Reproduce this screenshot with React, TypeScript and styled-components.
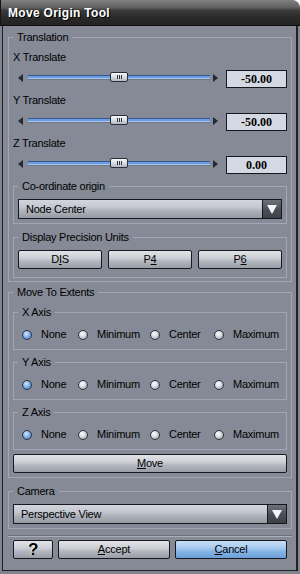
import React from "react";
import styled, { createGlobalStyle } from "styled-components";

const GlobalStyle = createGlobalStyle`
  html, body { margin: 0; padding: 0; background: #ffffff; }
  body { font-family: "Liberation Sans", Arial, sans-serif; }
  * { box-sizing: border-box; }
`;

const Window = styled.div`
  width: 300px;
  height: 574px;
  display: flex;
  flex-direction: column;
  background: #80848d;
  border-top-right-radius: 8px;
  padding-bottom: 3px;
  overflow: hidden;
`;

const TitleBar = styled.div`
  height: 26px;
  flex: none;
  border-bottom: 1px solid #0c0c0c;
  border-left: 1px solid #161616;
  border-top-right-radius: 8px;
  background: linear-gradient(#808080 0%, #606060 30%, #3a3a3a 42%, #2a2a2a 70%, #222 100%);
  display: flex;
  align-items: center;
  padding-left: 7px;
  color: #ffffff;
  font-weight: bold;
  font-size: 12px;
  letter-spacing: 0.3px;
  text-shadow: 1px 1px 0 #000;
  white-space: nowrap;
`;

const Body = styled.div`
  flex: 1;
  margin: 0 2px 0 2px;
  border-left: 1px solid #1f2126;
  border-right: 2px solid #1f2126;
  border-bottom: 1px solid #1f2126;
  background: #858a96;
  padding: 5px 4px 0 5px;
  display: flex;
  flex-direction: column;
`;

const Group = styled.fieldset<{ $pad: string; $mt?: number }>`
  margin: ${(p) => p.$mt ?? 0}px 0 0 0;
  min-width: 0;
  border: 1px solid #a1a6b0;
  padding: ${(p) => p.$pad};
`;

const Legend = styled.legend`
  padding: 0 4px;
  font-size: 11px;
  line-height: 13px;
  letter-spacing: -0.25px;
  color: #000;
`;

const Stack = styled.div<{ $gap: number }>`
  display: flex;
  flex-direction: column;
  gap: ${(p) => p.$gap}px;
`;

const Block = styled.div`
  display: flex;
  flex-direction: column;
  gap: 6px;
`;

const Label = styled.div`
  font-size: 11px;
  line-height: 13px;
  letter-spacing: -0.25px;
  color: #000;
`;

const SliderRow = styled.div`
  display: flex;
  align-items: center;
  height: 18px;
  padding-left: 5px;
`;

const ArrowLeft = styled.span`
  flex: none;
  width: 0;
  height: 0;
  border-top: 4px solid transparent;
  border-bottom: 4px solid transparent;
  border-right: 5px solid #232834;
  margin-bottom: 2px;
`;

const ArrowRight = styled.span`
  flex: none;
  width: 0;
  height: 0;
  border-top: 4px solid transparent;
  border-bottom: 4px solid transparent;
  border-left: 5px solid #232834;
  margin: 0 8px 2px 3px;
`;

const Track = styled.div`
  flex: 1;
  position: relative;
  height: 5px;
  margin: 0 0 4px 5px;
  background: linear-gradient(#37578f 0px, #37578f 1px, #6c9be0 1px, #6c9be0 3px, #a9c6f0 3px, #a9c6f0 4px, #6f7685 4px);
`;

const Thumb = styled.div`
  position: absolute;
  top: -3px;
  width: 18px;
  height: 10px;
  margin-left: -9px;
  border: 1px solid #2a2f3a;
  border-radius: 2px;
  background: linear-gradient(#f6f7f9, #d9dce2 50%, #b3b7c0);
  display: flex;
  align-items: center;
  justify-content: center;
`;

const Grip = styled.span`
  width: 5px;
  height: 4px;
  background: linear-gradient(90deg, #2e323c 1px, transparent 1px) 0 0 / 2px 100%;
`;

const ValueBox = styled.div`
  flex: none;
  width: 61px;
  height: 18px;
  border: 1px solid #15171c;
  background: #d4d8e2;
  font-family: "Liberation Serif", "Times New Roman", serif;
  font-weight: bold;
  font-size: 12px;
  line-height: 16px;
  text-align: center;
  color: #000;
`;

const Select = styled.div`
  display: flex;
  height: 20px;
  border: 1px solid #16181d;
  background: linear-gradient(#d3d6dd 0%, #c4c7cf 40%, #aeb2ba 60%, #969aa3 100%);
`;

const SelectText = styled.span`
  flex: 1;
  padding-left: 7px;
  font-size: 11px;
  line-height: 18px;
  letter-spacing: -0.25px;
  color: #000;
`;

const SelectArrow = styled.span`
  flex: none;
  width: 19px;
  border-left: 1px solid #16181d;
  background: linear-gradient(#6e727c, #4a4d55 55%, #3e4148);
  display: flex;
  align-items: center;
  justify-content: center;
`;

const DownTriangle = styled.span`
  width: 0;
  height: 0;
  border-left: 5px solid transparent;
  border-right: 5px solid transparent;
  border-top: 9px solid #f4f5f8;
`;

const ButtonGrid = styled.div<{ $cols: string; $gap: number }>`
  display: grid;
  grid-template-columns: ${(p) => p.$cols};
  gap: ${(p) => p.$gap}px;
`;

const Button = styled.button<{ $primary?: boolean; $mt?: number }>`
  height: 19px;
  padding: 0;
  margin: ${(p) => p.$mt ?? 0}px 0 0 0;
  border: 1px solid #17191e;
  border-radius: 2px;
  background: ${(p) =>
    p.$primary
      ? "linear-gradient(#c6def6 0%, #a9cbef 40%, #86b5e6 60%, #6b9fd8 100%)"
      : "linear-gradient(#e1e3e8 0%, #cdd0d6 40%, #b4b7bf 60%, #999da6 100%)"};
  font-family: "Liberation Sans", Arial, sans-serif;
  font-size: 11px;
  letter-spacing: -0.2px;
  color: #000;
  line-height: 17px;
  text-align: center;
`;

const HelpMark = styled.span`
  font-weight: bold;
  font-size: 17px;
  line-height: 17px;
  color: #000;
  text-shadow: -1px 0 0 #ffffff;
`;

const RadioRow = styled.div`
  display: grid;
  grid-template-columns: 56px 72px 64px auto;
  height: 13px;
  padding-left: 4px;
`;

const RadioItem = styled.label`
  display: flex;
  align-items: center;
  gap: 9px;
  font-size: 11px;
  line-height: 13px;
  letter-spacing: -0.25px;
  color: #000;
  white-space: nowrap;
`;

const RadioDot = styled.span<{ $checked?: boolean }>`
  flex: none;
  width: 10px;
  height: 10px;
  border-radius: 50%;
  border: 1px solid #2f333d;
  background: ${(p) =>
    p.$checked
      ? "radial-gradient(circle at 40% 35%, #d6e8fc 0%, #82b2ee 45%, #3d70bb 100%)"
      : "radial-gradient(circle at 40% 35%, #ffffff 0%, #d5d8de 45%, #8c9099 100%)"};
`;

const Separator = styled.div`
  margin-top: 6px;
  height: 2px;
  border-top: 1px solid #6b707a;
  border-bottom: 1px solid #aab0ba;
`;

const BottomRow = styled(ButtonGrid)`
  margin-top: 3px;
  padding: 0 5px;
`;

type SliderProps = { label: string; value: string; pos: number };

function Slider({ label, value, pos }: SliderProps) {
  return (
    <Block>
      <Label>{label}</Label>
      <SliderRow>
        <ArrowLeft />
        <Track>
          <Thumb style={{ left: `${pos * 100}%` }}>
            <Grip />
          </Thumb>
        </Track>
        <ArrowRight />
        <ValueBox>{value}</ValueBox>
      </SliderRow>
    </Block>
  );
}

function Dropdown({ text }: { text: string }) {
  return (
    <Select>
      <SelectText>{text}</SelectText>
      <SelectArrow>
        <DownTriangle />
      </SelectArrow>
    </Select>
  );
}

const options = ["None", "Minimum", "Center", "Maximum"];

function AxisGroup({ name, mt }: { name: string; mt: number }) {
  return (
    <Group $pad="9px 4px 8px 4px" $mt={mt}>
      <Legend>{name}</Legend>
      <RadioRow>
        {options.map((o, i) => (
          <RadioItem key={o}>
            <RadioDot $checked={i === 0} />
            {o}
          </RadioItem>
        ))}
      </RadioRow>
    </Group>
  );
}

export default function App() {
  return (
    <>
      <GlobalStyle />
      <Window>
        <TitleBar>Move Origin Tool</TitleBar>
        <Body>
          <Group $pad="7px 4px 3px 4px">
            <Legend>Translation</Legend>
            <Stack $gap={6}>
              <Slider label="X Translate" value="-50.00" pos={0.5} />
              <Slider label="Y Translate" value="-50.00" pos={0.5} />
              <Slider label="Z Translate" value="0.00" pos={0.5} />
              <Group $pad="6px 4px 4px 4px">
                <Legend>Co-ordinate origin</Legend>
                <Dropdown text="Node Center" />
              </Group>
              <Group $pad="6px 4px 8px 4px" $mt={1}>
                <Legend>Display Precision Units</Legend>
                <ButtonGrid $cols="1fr 1fr 1fr" $gap={6}>
                  <Button>
                    D<u>I</u>S
                  </Button>
                  <Button>
                    P<u>4</u>
                  </Button>
                  <Button>
                    P<u>6</u>
                  </Button>
                </ButtonGrid>
              </Group>
            </Stack>
          </Group>

          <Group $pad="7px 4px 4px 4px" $mt={4}>
            <Legend>Move To Extents</Legend>
            <Stack $gap={0}>
              <AxisGroup name="X Axis" mt={0} />
              <AxisGroup name="Y Axis" mt={6} />
              <AxisGroup name="Z Axis" mt={6} />
              <Button $mt={4}>
                <u>M</u>ove
              </Button>
            </Stack>
          </Group>

          <Group $pad="6px 4px 4px 4px" $mt={7}>
            <Legend>Camera</Legend>
            <Dropdown text="Perspective View" />
          </Group>

          <Separator />

          <BottomRow $cols="40px 1fr 1fr" $gap={5}>
            <Button>
              <HelpMark>?</HelpMark>
            </Button>
            <Button>
              <u>A</u>ccept
            </Button>
            <Button $primary>
              <u>C</u>ancel
            </Button>
          </BottomRow>
        </Body>
      </Window>
    </>
  );
}
